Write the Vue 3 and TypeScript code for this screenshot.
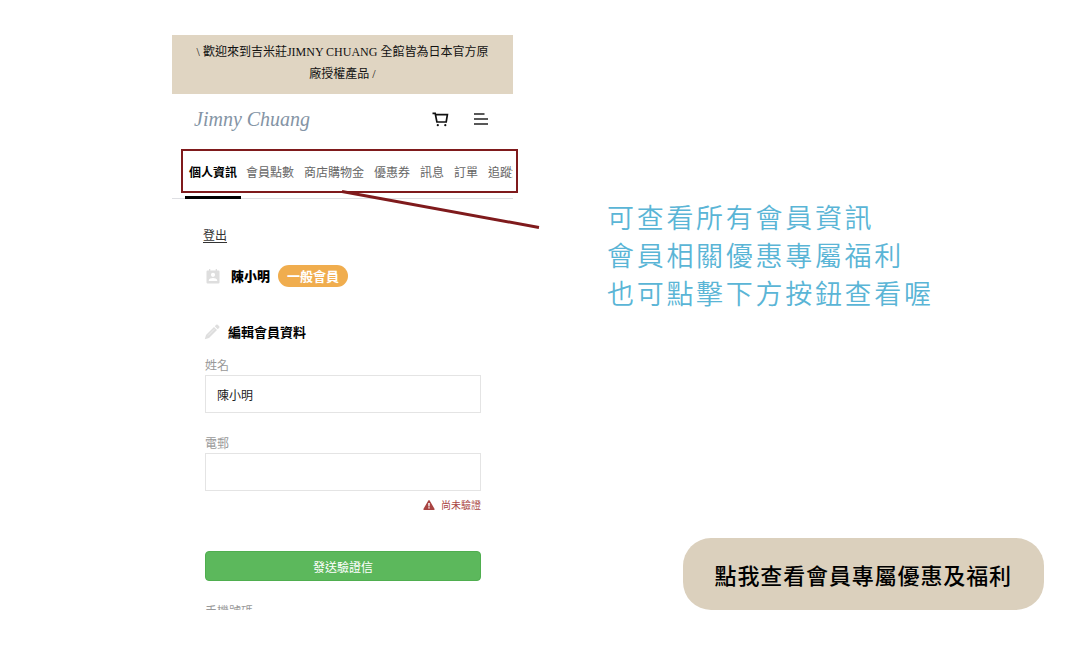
<script setup lang="ts">
import { ref } from 'vue'

const tabs: string[] = ['個人資訊', '會員點數', '商店購物金', '優惠券', '訊息', '訂單', '追蹤清單']
const activeTab = ref<string>(tabs[0])
const memberName = ref<string>('陳小明')
const email = ref<string>('')
const notes: string[] = ['可查看所有會員資訊', '會員相關優惠專屬福利', '也可點擊下方按鈕查看喔']
</script>

<template>
  <main class="page">
    <section class="preview">
      <div class="phone">
        <p class="banner">\ 歡迎來到吉米莊JIMNY CHUANG 全館皆為日本官方原廠授權產品 /</p>

        <header class="header">
          <a class="logo" href="#">Jimny Chuang</a>
          <button class="icon-button" type="button" aria-label="購物車">
            <svg width="17" height="15" viewBox="0 0 17 15" fill="none" stroke="#111" stroke-width="1.7">
              <path d="M0.5 1.4H3.2L4.9 10H14.2L15.4 2.6H3.6" />
              <circle cx="5.8" cy="13.2" r="1.1" fill="#111" stroke="none" />
              <circle cx="13.3" cy="13.2" r="1.1" fill="#111" stroke="none" />
            </svg>
          </button>
          <button class="icon-button" type="button" aria-label="選單">
            <svg width="14" height="12" viewBox="0 0 14 12" fill="none" stroke="#222" stroke-width="1.4">
              <path d="M0 1H10.5M0 6H14M0 11H14" />
            </svg>
          </button>
        </header>

        <nav class="tabs">
          <button
            v-for="tab in tabs"
            :key="tab"
            type="button"
            class="tab"
            :class="{ active: tab === activeTab }"
            @click="activeTab = tab"
          >{{ tab }}</button>
        </nav>

        <div class="account">
          <a class="logout" href="#">登出</a>
          <div class="row member">
            <svg class="row-icon" width="14" height="15" viewBox="0 0 14 15" fill="#dedede">
              <path fill-rule="evenodd" d="M1.5 1.5H3V0H4.3V1.5H9.7V0H11V1.5H12.5Q13.5 1.5 13.5 2.5V13.5Q13.5 14.5 12.5 14.5H1.5Q.5 14.5 .5 13.5V2.5Q.5 1.5 1.5 1.5ZM7 3.7A2.1 2.1 0 1 0 7 7.9A2.1 2.1 0 1 0 7 3.7ZM2.8 12H11.2V11.2C11.2 9.6 8.8 8.9 7 8.9S2.8 9.6 2.8 11.2Z" />
            </svg>
            <strong class="name">{{ memberName }}</strong>
            <span class="badge">一般會員</span>
          </div>
          <h2 class="row title">
            <svg class="row-icon" width="16" height="16" viewBox="0 0 16 16" fill="#dedede">
              <path d="M10.8 2.2L12.2.8Q12.9.1 13.7.8L15.2 2.3Q15.9 3.1 15.2 3.8L13.8 5.2ZM10 3L13 6L5 14L.8 15.2L2 11Z" />
              <path d="M10.4 5.2L4.2 11.4" stroke="#f7f7f7" stroke-width=".7" />
            </svg>
            編輯會員資料
          </h2>
        </div>

        <form class="form" @submit.prevent>
          <label for="member-name">姓名</label>
          <input id="member-name" v-model="memberName" type="text" />
          <label class="next" for="member-email">電郵</label>
          <input id="member-email" v-model="email" type="email" />
          <p class="warning">
            <svg width="12" height="10" viewBox="0 0 12 10" fill="#a94442">
              <path fill-rule="evenodd" d="M5.3.5Q6 -.4 6.7.5L11.6 9Q11.8 10 11 10H1Q.2 10 .4 9ZM5.2 3L5.4 6.4H6.6L6.8 3ZM5.3 7.2V8.6H6.7V7.2Z" />
            </svg>
            尚未驗證
          </p>
          <button class="submit" type="submit">發送驗證信</button>
          <label class="next" for="member-phone">手機號碼</label>
          <input id="member-phone" type="tel" />
        </form>
      </div>

      <div class="highlight"></div>
      <svg class="pointer" width="200" height="40" viewBox="0 0 200 40">
        <path d="M1 1.5L198 37.5" stroke="#7f1a1c" stroke-width="3" />
      </svg>
    </section>

    <aside class="side">
      <p class="notes">
        <span v-for="note in notes" :key="note">{{ note }}</span>
      </p>
      <a class="cta" href="#">點我查看會員專屬優惠及福利</a>
    </aside>
  </main>
</template>

<style>
body {
  margin: 0;
  background: #fff;
}
</style>

<style scoped>
.page {
  box-sizing: border-box;
  display: grid;
  grid-template-columns: 341fr 437fr;
  column-gap: 94px;
  height: 100vh;
  padding: 35px 36px 42px 172px;
  font-family: "Noto Sans CJK TC", sans-serif;
  font-size: 12px;
  color: #111;
}

button,
input {
  box-sizing: border-box;
  margin: 0;
  font: inherit;
}

.preview {
  position: relative;
  min-width: 0;
  min-height: 0;
}

.phone {
  height: 100%;
  overflow: hidden;
}

.banner {
  margin: 0;
  padding: 6px 20px 9px;
  background: #e0d5c2;
  font-family: "Liberation Serif", "Noto Sans CJK TC", serif;
  line-height: 22px;
  text-align: center;
}

.header {
  display: flex;
  align-items: center;
  gap: 25px;
  height: 50px;
  padding: 0 25px 0 22px;
}

.logo {
  margin-right: auto;
  font-family: "Liberation Serif", cursive;
  font-size: 20px;
  font-style: italic;
  color: #8494a5;
  text-decoration: none;
}

.icon-button {
  display: flex;
  padding: 0;
  border: 0;
  background: none;
}

.tabs {
  display: flex;
  height: 55px;
  padding-left: 13px;
  overflow: hidden;
  box-shadow: inset 0 -1px #dedfe3;
}

.tab {
  flex: none;
  padding: 0 5px 1px;
  border: 0 solid transparent;
  border-width: 3px 0;
  background: none;
  color: #666;
  white-space: nowrap;
}

.tab.active {
  padding-right: 4px;
  padding-left: 4px;
  border-bottom-color: #000;
  color: #000;
  font-weight: 700;
}

.account {
  padding: 26px 31px 0;
}

.logout {
  display: block;
  width: max-content;
  line-height: 20px;
  color: #333;
  text-decoration: underline;
  text-underline-offset: 2px;
}

.row {
  display: flex;
  align-items: center;
  height: 22px;
  margin: 0;
  font-size: 13px;
  font-weight: 700;
  line-height: 22px;
  color: #000;
}

.member {
  margin-top: 20px;
  padding-left: 3px;
}

.name {
  margin: 0 8px 0 11px;
}

.badge {
  padding: 0 9px;
  border-radius: 11px;
  background: #f0ad4e;
  color: #fff;
}

.title {
  gap: 8px;
  margin-top: 34px;
  padding-left: 1px;
}

.form {
  display: flex;
  flex-direction: column;
  padding: 12px 32px 0 33px;
}

.form label {
  line-height: 20px;
  color: #999;
}

.form .next {
  margin-top: 20px;
}

.form input {
  width: 100%;
  height: 38px;
  padding: 0 11px;
  border: 1px solid #e4e4e4;
  border-radius: 0;
  background: #fff;
  color: #222;
}

.warning {
  display: flex;
  align-items: center;
  justify-content: flex-end;
  gap: 6px;
  margin: 4px 0 0;
  font-size: 10px;
  line-height: 20px;
  color: #a94442;
}

.submit {
  flex: none;
  height: 30px;
  margin-top: 36px;
  padding: 0;
  border: 1px solid #4fae4f;
  border-radius: 4px;
  background: #5cb85c;
  color: #fff;
}

.highlight {
  position: absolute;
  top: 114px;
  right: -5px;
  left: 9px;
  box-sizing: border-box;
  height: 44px;
  border: 2px solid #7f1a1c;
  pointer-events: none;
}

.pointer {
  position: absolute;
  top: 155px;
  left: 169px;
  pointer-events: none;
}

.side {
  display: flex;
  flex-direction: column;
  justify-content: space-between;
  min-width: 0;
}

.notes {
  display: flex;
  flex-direction: column;
  margin: 163px 0 0;
  font-size: 27px;
  font-weight: 350;
  line-height: 38px;
  letter-spacing: 0.1em;
  color: #5ab5d6;
}

.cta {
  align-self: flex-end;
  padding: 0 32px;
  border-radius: 28px;
  background: #dbd0bd;
  font-size: 22px;
  font-weight: 500;
  line-height: 72px;
  letter-spacing: 0.04em;
  color: #000;
  text-decoration: none;
}
</style>
